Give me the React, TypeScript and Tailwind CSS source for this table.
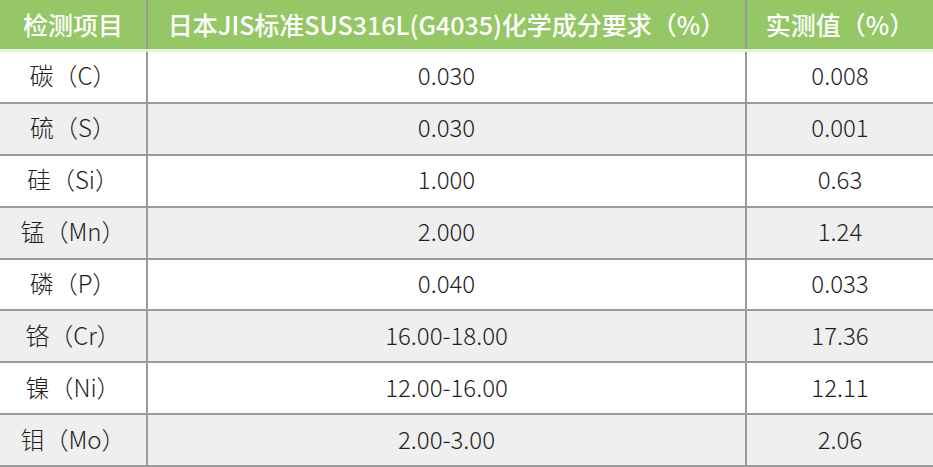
import React from "react";

const rows = [
  { name: "碳（C）", std: "0.030", val: "0.008" },
  { name: "硫（S）", std: "0.030", val: "0.001" },
  { name: "硅（Si）", std: "1.000", val: "0.63" },
  { name: "锰（Mn）", std: "2.000", val: "1.24" },
  { name: "磷（P）", std: "0.040", val: "0.033" },
  { name: "铬（Cr）", std: "16.00-18.00", val: "17.36" },
  { name: "镍（Ni）", std: "12.00-16.00", val: "12.11" },
  { name: "钼（Mo）", std: "2.00-3.00", val: "2.06" },
];

const font = { fontFamily: '"Noto Sans CJK SC", sans-serif' };

export default function App() {
  return (
    <div className="w-[933px] h-[467px] bg-white overflow-hidden" style={font}>
      {/* header */}
      <div className="grid grid-cols-[148px_599px_1fr] h-[52px] bg-[#95c766] border-b-[3px] border-[#e4f1d6] text-white text-[25px] font-medium">
        <div className="flex items-center justify-center border-r-2 border-[#9a9a9a]">检测项目</div>
        <div className="flex items-center justify-center border-r-2 border-[#9a9a9a]">日本JIS标准SUS316L(G4035)化学成分要求（%）</div>
        <div className="flex items-center justify-center">实测值（%）</div>
      </div>

      {/* body */}
      {rows.map((r, i) => (
        <div
          key={r.name}
          className={
            "grid grid-cols-[148px_599px_1fr] h-[51.875px] border-b-2 border-[#9a9a9a] text-[24px] font-light text-[#1e1e1e]" +
            (i % 2 === 1 ? " bg-[#efefef]" : " bg-white")
          }
        >
          <div className="flex items-center justify-center pb-[3px] border-r-2 border-[#9a9a9a]">{r.name}</div>
          <div className="flex items-center justify-center pb-[3px] border-r-2 border-[#9a9a9a]">{r.std}</div>
          <div className="flex items-center justify-center pb-[3px]">{r.val}</div>
        </div>
      ))}
    </div>
  );
}
